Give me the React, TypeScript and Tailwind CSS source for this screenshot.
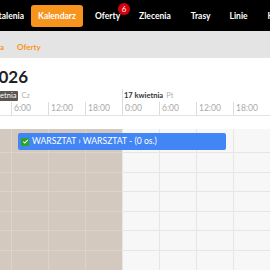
import React from "react";

const HOURS = ["0:00", "6:00", "12:00", "18:00"];
const ROWS = [20, 19, 20, 19, 20, 20];

const DAYS = [
  { label: "16 kwietnia", dow: "Cz", today: true, off: true },
  { label: "17 kwietnia", dow: "Pt", today: false, off: false },
  { label: "18 kwietnia", dow: "So", today: false, off: false },
];

function DayCells({ off, h, first }: { off: boolean; h: number; first?: boolean }) {
  return (
    <div className="flex shrink-0 w-[148px]" style={{ height: h }}>
      {HOURS.map((t) => (
        <div
          key={t}
          className={`w-[37px] shrink-0 border-l ${first ? "" : "border-t"} ${
            off ? "bg-[#d3c9bf] border-[#dcd4cc]" : "bg-[#f7f7f7] border-[#e6e6e6]"
          }`}
        />
      ))}
    </div>
  );
}

export default function App() {
  return (
    <div className="w-[270px] h-[270px] overflow-hidden bg-white font-['Lato',sans-serif] text-[#333] flex flex-col">
      {/* Top nav */}
      <nav className="h-[31px] shrink-0 bg-black flex items-center text-white font-bold text-[8.5px] leading-[12px] whitespace-nowrap">
        <div className="w-[24px] shrink-0 flex justify-end overflow-hidden">
          <span>Ustalenia</span>
        </div>
        <span className="ml-[7px] shrink-0 w-[52px] h-[22px] flex items-center justify-center bg-[#f7941d] rounded-[3px]">Kalendarz</span>
        <span className="ml-[12px] shrink-0 relative">
          Oferty
          <span className="absolute -top-[7px] -right-[10px] w-[12px] h-[12px] rounded-full bg-[#d8000c] text-[8px] leading-[12px] font-normal flex items-center justify-center">
            6
          </span>
        </span>
        <span className="ml-[19px] shrink-0">Zlecenia</span>
        <span className="ml-[20px] shrink-0">Trasy</span>
        <span className="ml-[19px] shrink-0">Linie</span>
        <span className="ml-[20px] shrink-0">Klienci</span>
      </nav>

      {/* Breadcrumb */}
      <div className="h-[27px] shrink-0 bg-[#e4e4e4] flex items-center pt-[5px] text-[8px] font-bold text-[#f7941d] whitespace-nowrap">
        <div className="w-[4px] shrink-0 flex justify-end overflow-hidden">
          <span>Strona główna</span>
        </div>
        <span className="ml-[13px] shrink-0">Oferty</span>
      </div>

      {/* Title */}
      <div className="mt-[9px] h-[20px] flex whitespace-nowrap">
        <div className="w-[28px] shrink-0 flex justify-end">
          <h1 className="text-[17px] leading-[20px] font-bold text-[#222]">Kwiecień 2026</h1>
        </div>
      </div>

      {/* Day headers */}
      <div className="mt-[2px] flex -ml-[26px] border-b border-[#e2e2e2] whitespace-nowrap">
        {DAYS.map((d) => (
          <div key={d.label} className="w-[148px] shrink-0 flex flex-col">
            <div className="h-[13px] border-l border-[#dcdcdc] flex items-center gap-[3px] pl-[1px] text-[7.5px]">
              {d.today ? (
                <span className="bg-[#5d5550] text-white px-[2px] leading-[10px] rounded-[1px]">{d.label}</span>
              ) : (
                <span className="font-bold text-[#333] leading-[10px]">{d.label}</span>
              )}
              <span className="text-[#b0b0b0] leading-[10px]">{d.dow}</span>
            </div>
            <div className="flex h-[13px]">
              {HOURS.map((t) => (
                <div key={t} className="w-[37px] shrink-0 border-l border-[#dcdcdc] pl-[2px] pt-[1px] text-[8.5px] leading-[11px] text-[#aaa]">
                  {t}
                </div>
              ))}
            </div>
          </div>
        ))}
      </div>

      {/* Grid */}
      <div className="mt-[13px] -ml-[26px] flex flex-col">
        <div className="relative flex">
          {DAYS.map((d) => (
            <DayCells key={d.label} off={d.off} h={23} first />
          ))}
          <div className="absolute left-[44px] top-[4px] w-[208px] h-[17px] rounded-[2px] bg-[#4285f4] flex items-center gap-[3px] pl-[3px] text-white text-[8.6px] whitespace-nowrap">
            <span className="w-[8px] h-[8px] bg-[#2aa52a] flex items-center justify-center">
              <svg viewBox="0 0 8 8" className="w-[7px] h-[7px]">
                <path d="M1.5 4.2 L3.2 5.8 L6.6 2.2" fill="none" stroke="white" strokeWidth="1.2" />
              </svg>
            </span>
            <span>WARSZTAT › WARSZTAT - (0 os.)</span>
          </div>
        </div>
        {ROWS.map((h, i) => (
          <div key={i} className="flex">
            {DAYS.map((d) => (
              <DayCells key={d.label} off={d.off} h={h} />
            ))}
          </div>
        ))}
      </div>
    </div>
  );
}
